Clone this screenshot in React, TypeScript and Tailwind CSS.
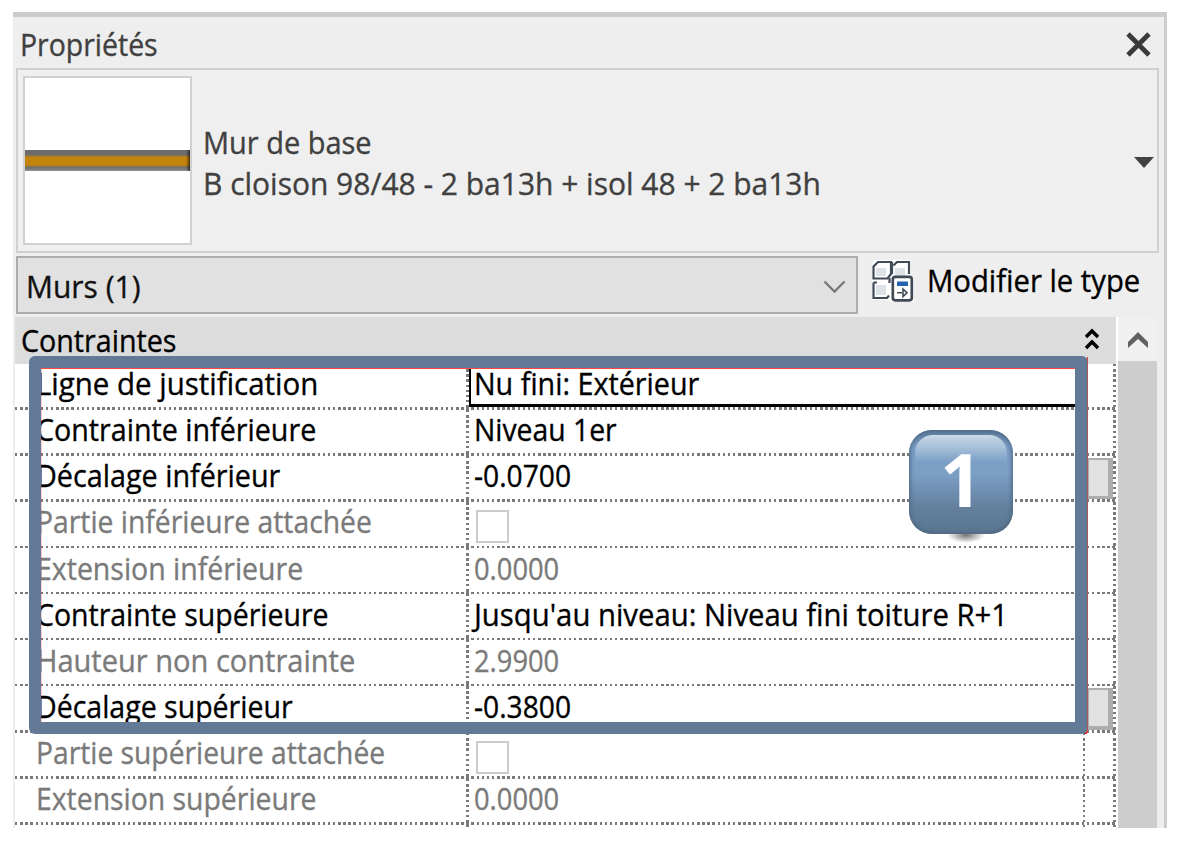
import { useLayoutEffect, useRef, useState } from "react";
import clsx from "clsx";

/** Single-line text condensed horizontally to occupy the given width. */
function FitText({ text, width, className }: { text: string; width: number; className?: string }) {
  const ref = useRef<HTMLSpanElement>(null);
  const [scale, setScale] = useState(0.94);
  useLayoutEffect(() => {
    if (ref.current) setScale(width / ref.current.offsetWidth);
  }, [text, width]);
  return (
    <div
      className={clsx(
        "h-[38px] shrink-0 whitespace-pre text-[30.5px] leading-[38px] [-webkit-text-stroke:0.35px_currentColor]",
        className,
      )}
      style={{ width }}
    >
      <span ref={ref} className="inline-block origin-left" style={{ transform: `scaleX(${scale})` }}>
        {text}
      </span>
    </div>
  );
}

type Row = {
  label: string;
  labelWidth: number;
  value?: string;
  valueWidth?: number;
  muted?: boolean;
  selected?: boolean;
  button?: boolean;
};

const rows: Row[] = [
  { label: "Ligne de justification", labelWidth: 282, value: "Nu fini: Extérieur", valueWidth: 225, selected: true },
  { label: "Contrainte inférieure", labelWidth: 280, value: "Niveau 1er", valueWidth: 143 },
  { label: "Décalage inférieur", labelWidth: 244, value: "-0.0700", valueWidth: 97, button: true },
  { label: "Partie inférieure attachée", labelWidth: 336, muted: true },
  { label: "Extension inférieure", labelWidth: 267, value: "0.0000", valueWidth: 85, muted: true },
  { label: "Contrainte supérieure", labelWidth: 293, value: "Jusqu'au niveau: Niveau fini toiture R+1", valueWidth: 534 },
  { label: "Hauteur non contrainte", labelWidth: 319, value: "2.9900", valueWidth: 85, muted: true },
  { label: "Décalage supérieur", labelWidth: 257, value: "-0.3800", valueWidth: 97, button: true },
  { label: "Partie supérieure attachée", labelWidth: 349, muted: true },
  { label: "Extension supérieure", labelWidth: 280, value: "0.0000", valueWidth: 85, muted: true },
];

const VLine = () => (
  <div className="w-[2.5px] shrink-0 bg-[repeating-linear-gradient(180deg,#7a7a7a_0_2.5px,#fff_2.5px_5.128px)]" />
);

function PropertyRow({ row }: { row: Row }) {
  return (
    <div className={clsx("flex h-[46.15px] shrink-0 flex-col", row.muted ? "text-[#7a7a7a]" : "text-black")}>
      <div className="flex min-h-0 flex-1">
        <div className="w-[451px] shrink-0 pt-[0.5px] pl-[20.5px]">
          <FitText text={row.label} width={row.labelWidth} />
        </div>
        <VLine />
        <div
          className={clsx(
            "w-[614px] shrink-0",
            row.selected ? "border-b-[3px] border-l-[2.5px] border-black pl-[3.5px]" : "pt-[0.5px] pl-[5.5px]",
          )}
        >
          {row.value ? (
            <FitText text={row.value} width={row.valueWidth ?? 100} />
          ) : (
            <div className="mt-[7.5px] ml-[2px] size-[33px] border-[2.5px] border-[#cccccc] bg-white" />
          )}
        </div>
        <VLine />
        <div className="w-[28px] shrink-0 pt-[2px] pl-[2px]">
          {row.button && (
            <div className="h-[42px] w-[26px] border-t-[2.5px] border-r-[5px] border-b-[4.5px] border-l-[2.5px] border-[#adadad] bg-[#e1e1e1]" />
          )}
        </div>
        <VLine />
      </div>
      <div className="h-[2.5px] shrink-0 bg-[repeating-linear-gradient(90deg,#7a7a7a_0_2.5px,#fff_2.5px_5.128px)]" />
    </div>
  );
}

function TypeIcon() {
  return (
    <svg width="42" height="42" viewBox="0 0 42 42" fill="none" stroke="#414b57" strokeWidth="2.2">
      <path d="M0 3l3-3h36v18h3v24H18v-2H0z" fill="#fff" stroke="none" />
      <path d="M4 8h10v8H4zM23 8h10v8H23zM4 25h10v10H4z" fill="#dde1e8" stroke="none" />
      <path d="M1.500 18.500V6.500L6 2h13v12l-3.500 4.500z" />
      <path d="M20 2v12M21.500 5.500L25 2h12v12" />
      <path d="M1.500 22.500V38H15l2-2.500M1.500 22.500H5M17.500 18v5" />
      <rect x="20.800" y="16.800" width="19" height="23.500" rx="2.500" fill="#fff" strokeWidth="2.700" />
      <path d="M25 21.500h11v4.500H25z" fill="#2563b0" stroke="none" />
      <path d="M25 32.800h5M31 29l4 3.800-4 3.800z" strokeWidth="1.600" />
    </svg>
  );
}

export default function App() {
  return (
    <div className="relative h-[852px] w-[1196px] overflow-hidden bg-white pt-[12px] pl-[13px] font-['Open_Sans','Noto_Sans',sans-serif]">
      <div className="flex h-[816px] w-[1154px] flex-col overflow-hidden border-t-[5px] border-r-[3px] border-[#cccccc] bg-[#eeeeee]">
        <div className="flex h-[51px] shrink-0 justify-between pt-[8px] pr-[13px] pl-[7px] text-[#404040]">
          <FitText text="Propriétés" width={138} />
          <svg className="mt-[7px]" width="25" height="25" viewBox="0 0 25 25" stroke="#3a3a3a" strokeWidth="4.8">
            <path d="M2 2l21 21M23 2L2 23" />
          </svg>
        </div>

        <div className="ml-[2.5px] flex h-[185px] w-[1143px] shrink-0 border-[2.5px] border-[#d0d0d0] bg-[#efefef] pt-[6px] pl-[5px] text-[#404040]">
          <div className="flex h-[169px] w-[169px] shrink-0 flex-col justify-center border-[2.5px] border-[#cfd0d2] bg-white">
            <div className="h-[21px] bg-[linear-gradient(180deg,#6c6c6c_0_4px,#8a7247_6px,#c4840c_7px_15px,#77705f_17px,#707070_18px,#929292_21px)]">
              <div className="ml-auto h-full w-[4px] bg-linear-to-r from-transparent to-black/60" />
            </div>
          </div>
          <div className="pt-[47px] pl-[11px]">
            <FitText text="Mur de base" width={169} />
            <FitText text="B cloison 98/48 - 2 ba13h + isol 48 + 2 ba13h" width={618} className="mt-[3px]" />
          </div>
          <svg className="mt-[81px] mr-[3px] ml-auto" width="20" height="11" viewBox="0 0 20 11">
            <path d="M0 0h20L10 11z" fill="#404244" />
          </svg>
        </div>

        <div className="flex h-[64px] shrink-0 pt-[3px] pl-[2.5px] text-black">
          <div className="flex h-[58px] w-[842px] shrink-0 items-start justify-between border-[2.5px] border-[#adadad] bg-[#e1e1e1] pt-[8.5px] pr-[10px] pl-[8px] text-[#111]">
            <FitText text="Murs (1)" width={115} />
            <svg className="mt-[13px]" width="23" height="14" viewBox="0 0 23 14" fill="none" stroke="#777" strokeWidth="2.3">
              <path d="M1.500 1.500l10 10 10-10" />
            </svg>
          </div>
          <div className="flex pt-[4px] pl-[14px]">
            <TypeIcon />
            <FitText text="Modifier le type" width={213} className="mt-px ml-[13px]" />
          </div>
        </div>

        <div className="flex min-h-0 flex-1 pl-[2px]">
          <div className="flex w-[1100.500px] shrink-0 flex-col bg-white">
            <div className="flex h-[46.500px] shrink-0 justify-between bg-[#dcdcdc] pt-[3.5px] pr-[17px] pl-[6px] text-black">
              <FitText text="Contraintes" width={156} />
              <svg className="mt-[7px]" width="14" height="22" viewBox="0 0 14 22" fill="none" stroke="#000" strokeWidth="3.4">
                <path d="M1 9l6-6 6 6M1 20l6-6 6 6" />
              </svg>
            </div>
            {rows.map((row) => (
              <PropertyRow key={row.label} row={row} />
            ))}
            <div className="flex h-[4px] shrink-0">
              <div className="w-[451px] shrink-0" />
              <VLine />
              <div className="w-[614px] shrink-0" />
              <VLine />
              <div className="w-[28px] shrink-0" />
              <VLine />
            </div>
          </div>
          <div className="w-[2.500px] shrink-0 bg-white" />
          <div className="flex w-[39px] shrink-0 flex-col">
            <div className="flex h-[44px] shrink-0 justify-center bg-[#f0f0f0] pt-[15px]">
              <svg width="20" height="17" viewBox="0 0 20 17">
                <path d="M10 0L0 10v6l10-9 10 9v-6z" fill="#606060" />
              </svg>
            </div>
            <div className="flex-1 bg-[#cdcdcd]" />
          </div>
        </div>
      </div>

      <div className="absolute top-[357px] left-[1087px] h-[376px] w-px bg-[#f0392b]" />
      <div className="absolute top-[731px] left-[1084px] size-[3px] bg-[#f0201b]" />
      <div className="absolute top-[356px] left-[29px] h-[378px] w-[1058.500px] rounded-[6px] bg-[#627a95] [clip-path:polygon(0_0,100%_0,100%_100%,0_100%,0_12px,12px_12px,12px_366px,1046px_366px,1046px_12px,0_12px)]" />
      <div className="absolute top-[368px] left-[41px] h-px w-[1034px] bg-[#ff4b3e]" />
      <div className="absolute top-[369px] left-[41px] h-[353px] w-px bg-[#f0392b]/25" />

      <div className="absolute top-[527px] left-[947px] h-[16px] w-[38px] bg-[radial-gradient(ellipse_at_center,rgba(0,0,0,0.55),transparent_70%)]" />
      <div className="absolute top-[430px] left-[909px] flex h-[104px] w-[104px] justify-center rounded-[23px] bg-[linear-gradient(180deg,#5d7b9c,#7c9fc6_15%,#7c9fc6_42%,#637f9c_75%,#5b7690)] shadow-[inset_0_0_5px_1px_#4a6480]">
        <div className="absolute top-[5px] left-[6px] h-[27px] w-[92px] rounded-t-[18px] bg-linear-to-b from-[#cbdbe8] to-[#7c9fc6]/0" />
        <span className="relative text-[73px] leading-[97px] font-bold text-white">1</span>
      </div>
    </div>
  );
}
